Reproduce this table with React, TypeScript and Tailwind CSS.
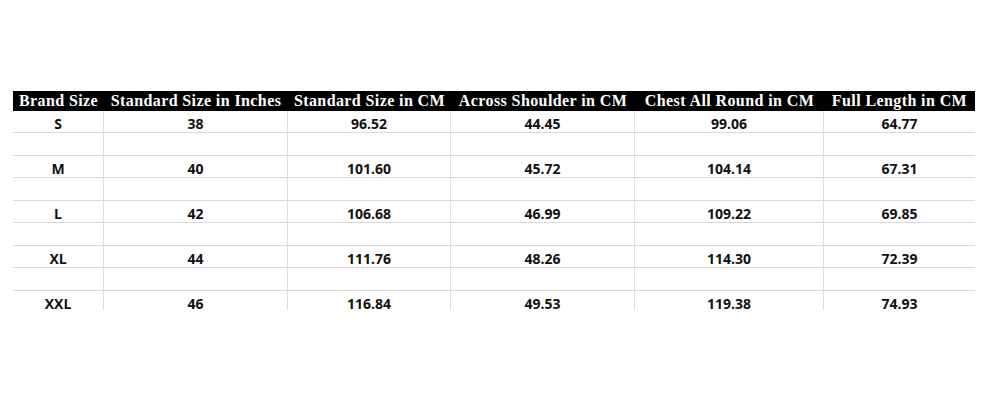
const headers = [
  'Brand Size',
  'Standard Size in Inches',
  'Standard Size in CM',
  'Across Shoulder in CM',
  'Chest All Round in CM',
  'Full Length in CM',
];

const rows = [
  ['S', '38', '96.52', '44.45', '99.06', '64.77'],
  ['M', '40', '101.60', '45.72', '104.14', '67.31'],
  ['L', '42', '106.68', '46.99', '109.22', '69.85'],
  ['XL', '44', '111.76', '48.26', '114.30', '72.39'],
  ['XXL', '46', '116.84', '49.53', '119.38', '74.93'],
];

const cols = 'grid grid-cols-[91px_184px_163px_184px_189px_151px]';

function Row({ cells, blank }: { cells: string[]; blank?: boolean }) {
  return (
    <div className={`${cols} ${blank ? 'h-[23px]' : 'h-[22px]'} border-b border-[#d9d9d9]`}>
      {cells.map((c, i) => (
        <div
          key={i}
          className={`flex items-center justify-center pt-[2px] ${i < cells.length - 1 ? 'border-r border-[#dedede]' : ''}`}
        >
          {c}
        </div>
      ))}
    </div>
  );
}

export default function App() {
  const empty = ['', '', '', '', '', ''];
  return (
    <div className="w-[1000px] h-[400px] bg-white pt-[91px] pl-[13px] overflow-hidden">
      <div className="w-[962px] h-[219px] overflow-hidden">
        <div className={`${cols} h-[20px] bg-black text-white font-bold text-[16px] tracking-[0.4px] leading-[20px] font-['Liberation_Serif',serif]`}>
          {headers.map((h) => (
            <div key={h} className="text-center whitespace-nowrap">{h}</div>
          ))}
        </div>
        <div className="font-['Open_Sans',sans-serif] font-bold text-[14px] text-[#111]">
          {rows.map((r, i) => (
            <div key={r[0]}>
              <Row cells={r} />
              {i < rows.length - 1 && <Row cells={empty} blank />}
            </div>
          ))}
        </div>
      </div>
    </div>
  );
}
